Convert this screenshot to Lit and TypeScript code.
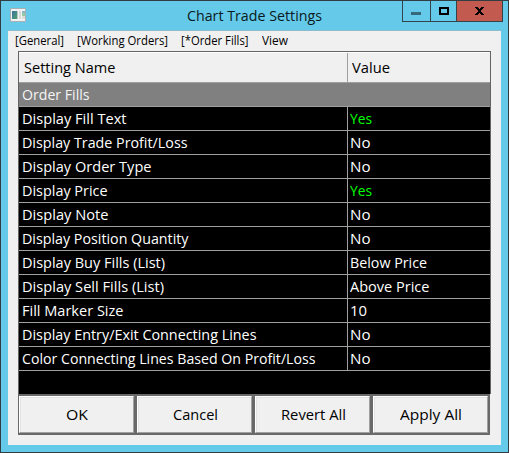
import { LitElement, html, css, svg } from "lit";
import { customElement, property } from "lit/decorators.js";

/** A single line of text condensed horizontally to a given width. */
@customElement("fit-label")
class FitLabel extends LitElement {
  static styles = css`
    :host { display: inline-block; white-space: nowrap; text-align: left; flex: none; }
    .text { display: inline-block; transform-origin: 0 50%; }
  `;
  @property({ type: String }) text = "";
  @property({ type: Number }) width = 0;

  render() {
    return html`<span class="text">${this.text}</span>`;
  }

  updated() {
    const span = this.renderRoot.querySelector(".text") as HTMLElement;
    this.style.width = "auto";
    span.style.transform = "none";
    const natural = span.getBoundingClientRect().width;
    this.style.width = `${this.width}px`;
    if (natural > 0) span.style.transform = `scaleX(${this.width / natural})`;
  }
}

type Label = [string, number];

const label = ([text, width]: Label) =>
  html`<fit-label .text=${text} .width=${width}></fit-label>`;

const YES: Label = ["Yes", 22];
const NO: Label = ["No", 20.5];

const ROWS: { name: Label; value: Label }[] = [
  { name: ["Display Fill Text", 104.5], value: YES },
  { name: ["Display Trade Profit/Loss", 165.5], value: NO },
  { name: ["Display Order Type", 129.5], value: NO },
  { name: ["Display Price", 85.5], value: YES },
  { name: ["Display Note", 86.5], value: NO },
  { name: ["Display Position Quantity", 166.5], value: NO },
  { name: ["Display Buy Fills (List)", 143], value: ["Below Price", 77] },
  { name: ["Display Sell Fills (List)", 142], value: ["Above Price", 79.5] },
  { name: ["Fill Marker Size", 101.5], value: ["10", 17] },
  { name: ["Display Entry/Exit Connecting Lines", 234.5], value: NO },
  { name: ["Color Connecting Lines Based On Profit/Loss", 293.5], value: NO },
];

const MENU: Label[] = [
  ["[General]", 49],
  ["[Working Orders]", 91],
  ["[*Order Fills]", 67.5],
  ["View", 26],
];

const BUTTONS: Label[] = [
  ["OK", 22],
  ["Cancel", 45],
  ["Revert All", 65],
  ["Apply All", 62],
];

@customElement("app-root")
class AppRoot extends LitElement {
  static styles = css`
    :host {
      display: block;
      width: 509px;
      height: 453px;
      font-family: "Open Sans", "Noto Sans", sans-serif;
      font-size: 15.3px;
      color: #000;
    }
    * { box-sizing: border-box; }
    .window {
      position: relative;
      width: 509px;
      height: 453px;
      border: 1px solid #323c43;
      background: #65c9ea;
      padding: 0 7px 7px;
      display: flex;
      flex-direction: column;
    }
    .title {
      height: 29px;
      flex: none;
      display: flex;
      justify-content: center;
      line-height: 29px;
      color: #0a1a20;
    }
    .app-icon { position: absolute; left: 9px; top: 7px; display: block; }
    .controls {
      position: absolute;
      right: 5px;
      top: 0;
      height: 21px;
      display: flex;
      border: 1px solid #32434b;
      border-top: 0;
    }
    .controls svg { display: block; }
    .control + .control { border-left: 1px solid #32434b; }
    .close { background: #c35a50; }
    .client {
      flex: 1;
      background: #f0f0f0;
      border-top: 1px solid #8fbccd;
      padding-left: 10px;
      min-height: 0;
    }
    .menu {
      display: flex;
      gap: 13.2px;
      height: 20px;
      margin-left: -3px;
      line-height: 20px;
      font-size: 12.3px;
    }
    .table {
      width: 473px;
      height: 343px;
      border: 1px solid #646464;
      border-bottom: 0;
      background: #000;
    }
    .head, .row { display: grid; grid-template-columns: 328px 1fr; grid-template-rows: 100%; }
    .head {
      height: 31px;
      background: #f0f0f0;
      border-top: 1px solid #fff;
      border-bottom: 1px solid #a0a0a0;
      line-height: 28px;
    }
    .cell { height: 100%; overflow: hidden; }
    .head .cell { padding-left: 4.5px; }
    .head .cell + .cell { border-left: 1px solid #a0a0a0; padding-left: 4px; }
    .group {
      height: 24px;
      background: #808080;
      border-bottom: 1px solid #a0a0a0;
      color: #f4f4f4;
      line-height: 23px;
      padding-left: 2.5px;
    }
    .row {
      height: 24px;
      border-bottom: 1px solid #a0a0a0;
      color: #fff;
      line-height: 23px;
    }
    .row .cell { padding-left: 2.5px; }
    .row .cell + .cell { border-left: 1px solid #a0a0a0; padding-left: 2px; }
    .row .on { color: #00ff00; }
    .buttons { display: grid; grid-template-columns: repeat(4, 118px); }
    .button {
      height: 41px;
      border: 2px solid #696969;
      border-left-width: 1px;
    }
    .face {
      height: 37px;
      background: #f0f0f0;
      border: 1px solid #fff;
      border-right-color: #a0a0a0;
      border-bottom-color: #a0a0a0;
      box-shadow: inset 1px 1px 0 #e3e3e3;
      display: flex;
      justify-content: center;
      line-height: 35px;
      padding-left: 1px;
    }
  `;

  private icon() {
    return html`<svg class="app-icon" width="16" height="14" viewBox="0 0 16 14">
      ${svg`
        <rect x="0.5" y="0.5" width="15" height="13" rx="0.5" fill="#f2f2f2" stroke="#a9afb2"/>
        <defs><linearGradient id="g" x1="0" y1="0" x2="1" y2="1">
          <stop offset="0" stop-color="#3d70a5"/><stop offset="1" stop-color="#4ea36a"/>
        </linearGradient></defs>
        <rect x="2" y="3" width="5" height="8" fill="url(#g)"/>
        <rect x="7" y="3" width="1" height="8" fill="#b8c4c4"/>
        <rect x="9" y="3" width="2" height="8" fill="#d8d8d8"/>
        <rect x="12" y="3" width="3" height="2" fill="#8ab7c8"/>
        <rect x="12" y="5" width="3" height="3" fill="#93c9a5"/>
        <rect x="12" y="8" width="3" height="3" fill="#dddddd"/>
      `}
    </svg>`;
  }

  private controls() {
    return html`<div class="controls">
      <div class="control">
        <svg width="27" height="20"><rect x="8" y="11" width="10" height="3" fill="#35697b"/></svg>
      </div>
      <div class="control">
        <svg width="25" height="20">
          <path d="M8 6h10v8H8zM10 8v4h6V8z" fill="#000" fill-rule="evenodd"/>
        </svg>
      </div>
      <div class="control close">
        <svg width="45" height="20" shape-rendering="crispEdges">
          <path d="M18 6h3v1h1v1h1v-1h1v-1h3v1h-1v1h-1v1h-1v2h1v1h1v1h1v1h-3v-1h-1v-1h-1v1h-1v1h-3v-1h1v-1h1v-1h1v-2h-1v-1h-1v-1h-1z" fill="#000"/>
        </svg>
      </div>
    </div>`;
  }

  render() {
    return html`<div class="window">
      <div class="title">${label(["Chart Trade Settings", 135])}</div>
      ${this.icon()} ${this.controls()}
      <div class="client">
        <div class="menu">${MENU.map(label)}</div>
        <div class="table">
          <div class="head">
            <div class="cell">${label(["Setting Name", 91.5])}</div>
            <div class="cell">${label(["Value", 38])}</div>
          </div>
          <div class="group">${label(["Order Fills", 67.5])}</div>
          ${ROWS.map(
            (r) => html`<div class="row">
              <div class="cell">${label(r.name)}</div>
              <div class="cell ${r.value === YES ? "on" : ""}">${label(r.value)}</div>
            </div>`
          )}
        </div>
        <div class="buttons">
          ${BUTTONS.map((b) => html`<div class="button"><div class="face">${label(b)}</div></div>`)}
        </div>
      </div>
    </div>`;
  }
}
